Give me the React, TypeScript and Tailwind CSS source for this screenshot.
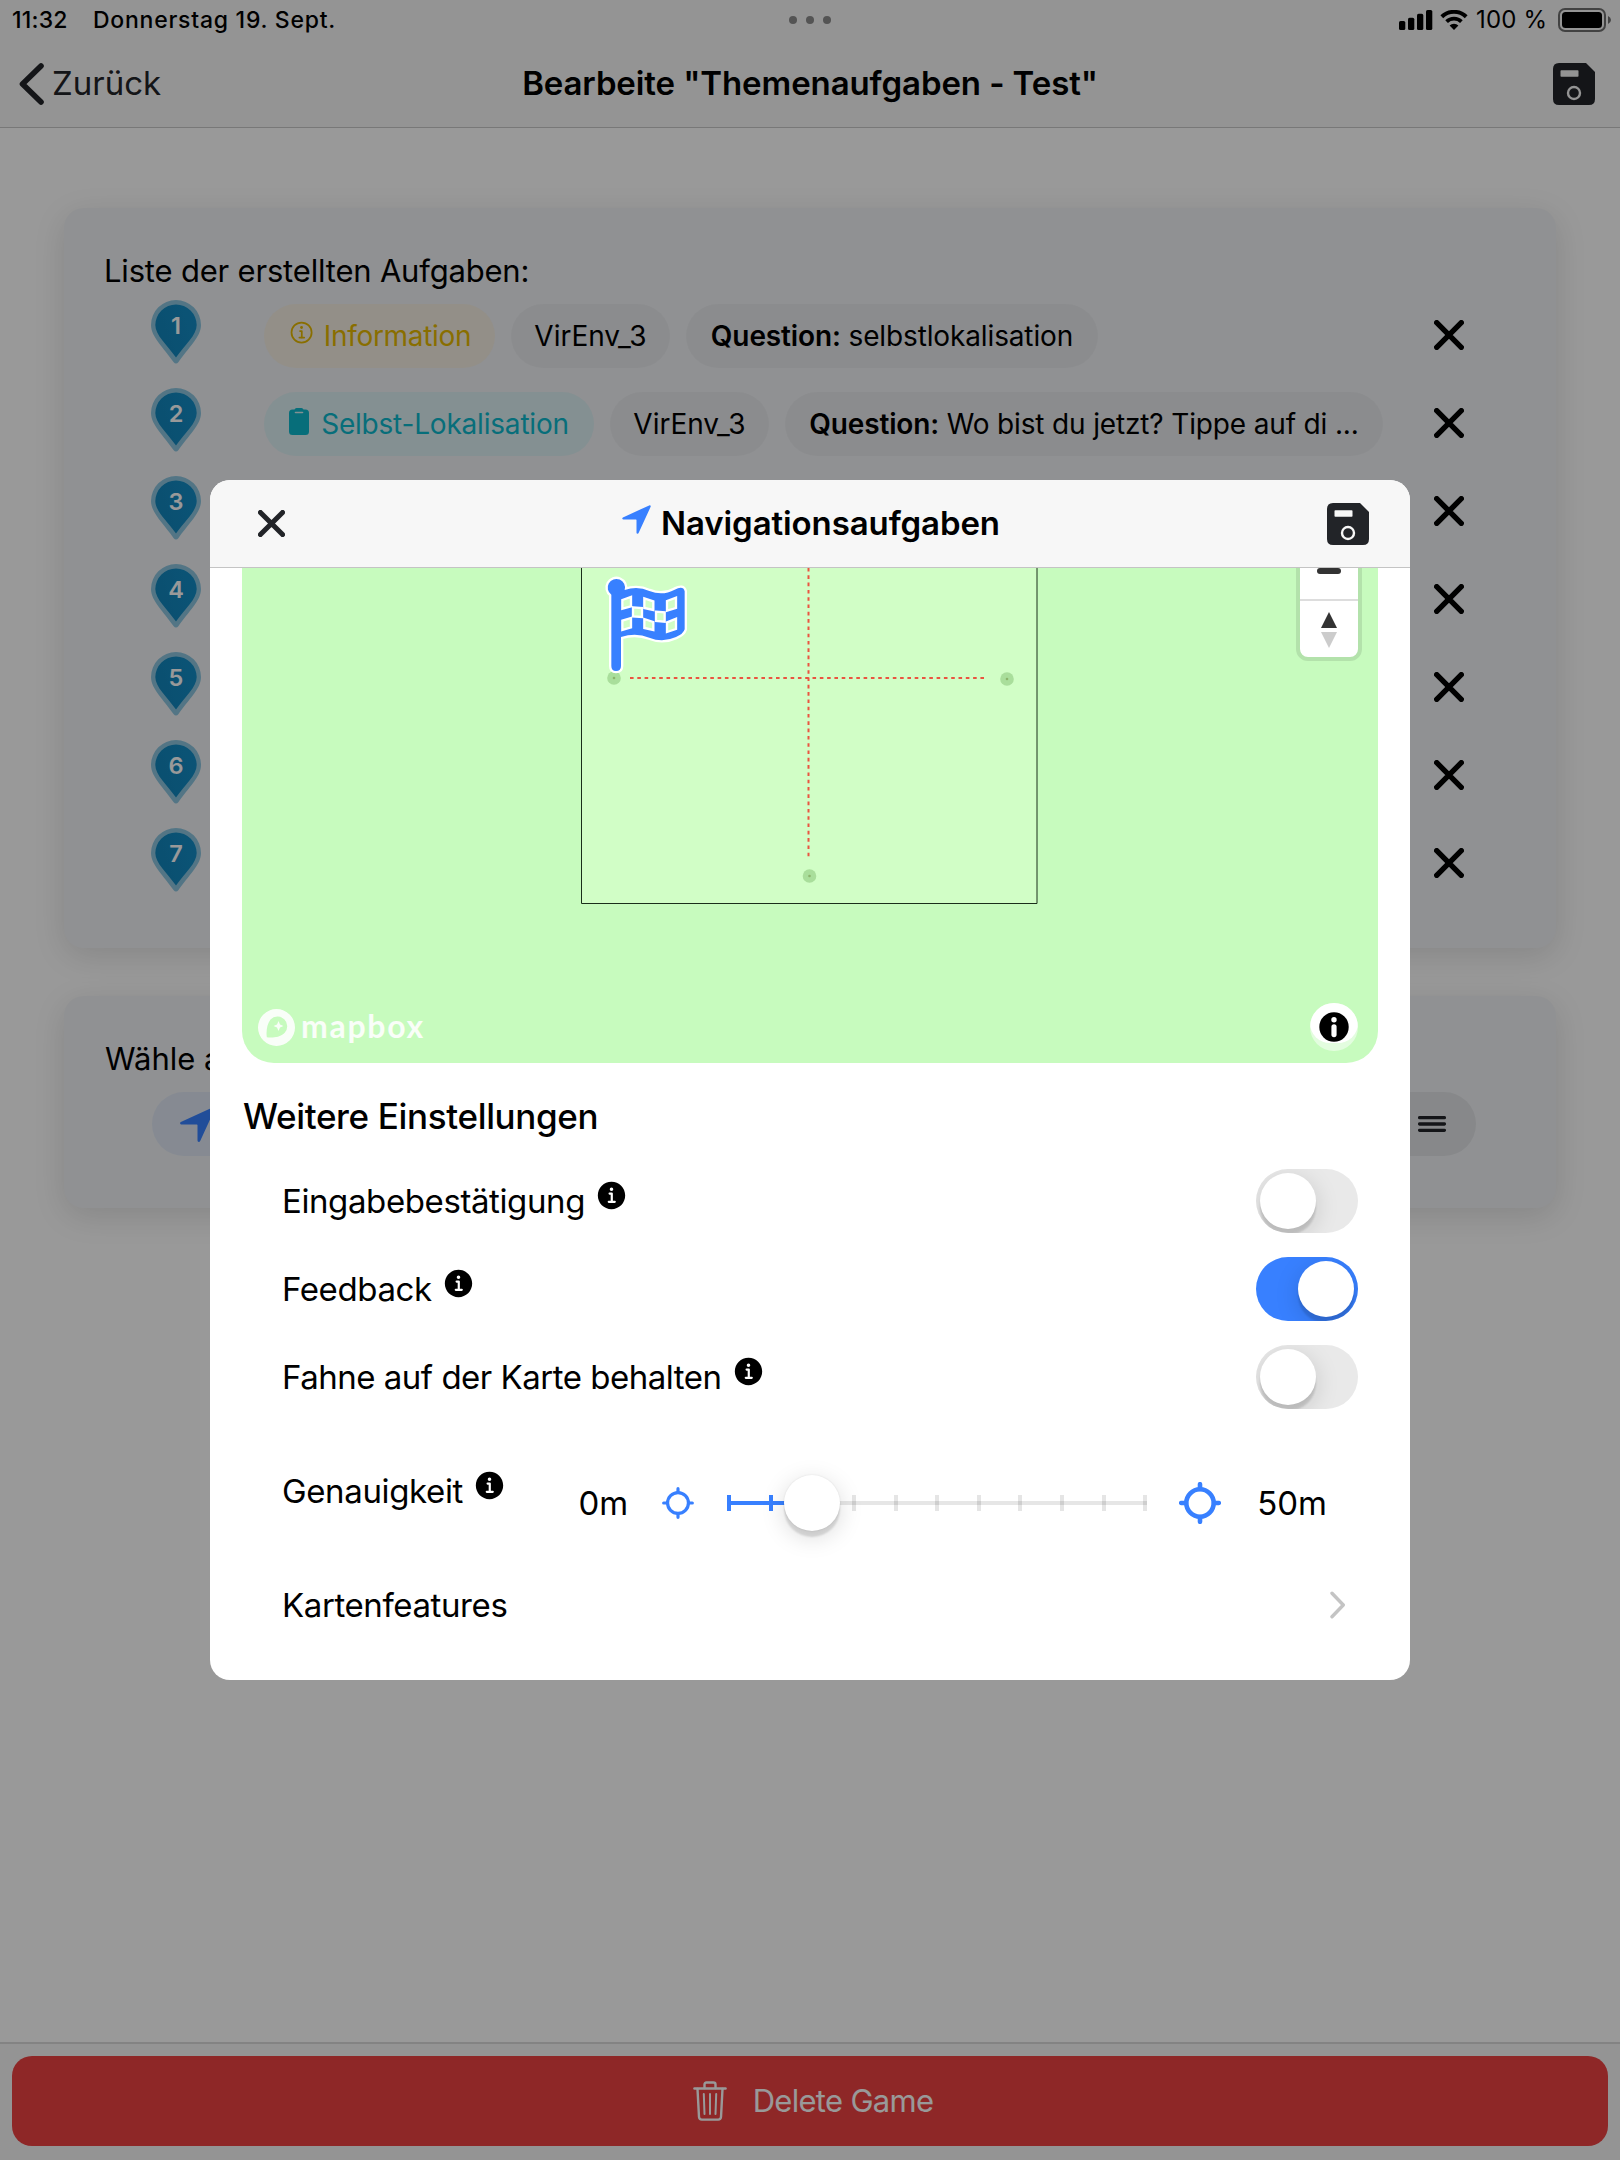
import React from "react";
import { IoInformationCircle, IoInformationCircleOutline, IoNavigate } from "react-icons/io5";

function SaveIcon({ hole }: { hole: string }) {
  return (
    <svg className="h-[42px] w-[42px] shrink-0" viewBox="0 0 42 42">
      <path d="M6 0H33L42 9V36Q42 42 36 42H6Q0 42 0 36V6Q0 0 6 0Z" fill="#222428" />
      <rect x="7.5" y="7.3" width="18" height="6.4" rx="0.8" fill={hole} />
      <circle cx="21" cy="30" r="6" fill="none" stroke={hole} strokeWidth="2.4" />
    </svg>
  );
}

function Cross({ className, width, color }: { className: string; width: number; color: string }) {
  return (
    <svg className={className} viewBox="0 0 30 30">
      <path d="M2.7 2.7L27.3 27.3M27.3 2.7L2.7 27.3" stroke={color} strokeWidth={width} strokeLinecap="round" />
    </svg>
  );
}

function StatusBar() {
  return (
    <div className="flex h-10 items-center pr-2 pl-3 text-[23px] font-medium">
      <span className="w-[81px] tracking-[0.2px]">11:32</span>
      <span className="tracking-[0.75px]">Donnerstag 19. Sept.</span>
      <div className="ml-auto flex items-center">
        <svg className="h-5 w-[34px]" viewBox="0 0 34 20">
          <rect x="0" y="11" width="6.3" height="9" rx="1.6" />
          <rect x="9" y="7.7" width="6.3" height="12.3" rx="1.6" />
          <rect x="18" y="3.8" width="6.3" height="16.2" rx="1.6" />
          <rect x="27" y="0" width="6.3" height="20" rx="1.6" />
        </svg>
        <svg className="ml-[7px] h-5 w-7" viewBox="0 0 28 20">
          <path d="M1.8 6.8A17.5 17.5 0 0 1 26.2 6.8" fill="none" stroke="#000" strokeWidth="4" />
          <path d="M6.6 11.7A10.6 10.6 0 0 1 21.4 11.7" fill="none" stroke="#000" strokeWidth="3.8" />
          <path d="M14 20L9.6 15.6A6.4 6.4 0 0 1 18.4 15.6Z" />
        </svg>
        <span className="ml-[8px] w-[82px] whitespace-nowrap text-[24px] font-normal tracking-[0.2px]">100 %</span>
        <svg className="h-6 w-[54px]" viewBox="0 0 54 24">
          <rect x="1" y="1" width="46" height="22" rx="6" fill="none" stroke="#6f6f6f" strokeWidth="2" />
          <rect x="4" y="4" width="40" height="16" rx="3.5" />
          <path d="M50 8Q53 9.5 53 12T50 16Z" fill="#6f6f6f" />
        </svg>
      </div>
    </div>
  );
}

function Pin({ n }: { n: number }) {
  return (
    <svg className="mb-[6px] h-16 w-[50px]" viewBox="0 0 50 64">
      <defs>
        <linearGradient id={`pin${n}`} x1="0" y1="0.6" x2="1" y2="0.2">
          <stop offset="0" stopColor="#1284ba" />
          <stop offset="1" stopColor="#138cc6" />
        </linearGradient>
      </defs>
      <path d="M25 0A25 25 0 0 1 50 25C50 37 37 48 27.5 62Q25 65 22.5 62C13 48 0 37 0 25A25 25 0 0 1 25 0Z" fill="#8bc4de" />
      <path d="M25 4.5A20.7 20.7 0 0 1 45.7 25C45.7 35 34 45 25 57.5C16 45 4.3 35 4.3 25A20.7 20.7 0 0 1 25 4.5Z" fill={`url(#pin${n})`} />
      <text x="25" y="33.5" textAnchor="middle" fontSize="23.5" fontWeight="600" fill="#fff" fontFamily="Inter">
        {n}
      </text>
    </svg>
  );
}

function Chip({ children, className }: { children: React.ReactNode; className: string }) {
  return (
    <div className={`flex h-16 items-center justify-center rounded-full text-[28px] whitespace-nowrap ${className}`}>
      {children}
    </div>
  );
}

function TaskRow({ n, children }: { n: number; children?: React.ReactNode }) {
  return (
    <div className="flex h-22 items-center pr-[92px] pl-[87px]">
      <Pin n={n} />
      <div className="mt-[2px] ml-[63px] flex gap-4">{children}</div>
      <Cross className="ml-auto h-[30px] w-[30px]" width={5.4} color="#000" />
    </div>
  );
}

function Toggle({ on }: { on?: boolean }) {
  return (
    <div className={`ml-auto flex h-16 w-[102px] overflow-hidden rounded-full p-1 ${on ? "justify-end bg-[#3880ff]" : "bg-[#e9e9e9]"}`}>
      <div className="h-14 w-14 rounded-full bg-white shadow-[0_6px_24px_rgba(0,0,0,0.15),0_6px_2px_rgba(0,0,0,0.12)]" />
    </div>
  );
}

function SettingRow({ label, tracking, info, children, className }: { label: string; tracking: string; info?: boolean; children?: React.ReactNode; className: string }) {
  return (
    <div className={`flex items-center pr-5 pl-[40px] text-[33px] ${className}`}>
      <span className={`pt-[2px] whitespace-nowrap ${tracking}`}>{label}</span>
      {info && <IoInformationCircle className="mb-3 ml-[9px] h-[35px] w-[35px] shrink-0" />}
      {children}
    </div>
  );
}

function Crosshair({ className, thick }: { className: string; thick: number }) {
  return (
    <svg className={className} viewBox="0 0 42 42" fill="none" stroke="#3880ff" strokeLinecap="round">
      <circle cx="21" cy="21" r="13.7" strokeWidth={thick} />
      <path d="M21 2.2V7M21 35V39.8M2.2 21H7M35 21H39.8" strokeWidth={thick} />
    </svg>
  );
}

function Slider() {
  return (
    <div className="relative ml-[33px] flex h-14 w-[420px] items-center">
      <div className="h-1 w-full bg-[#e6e6e6]" />
      <div className="absolute inset-0 flex items-center justify-between">
        {Array.from({ length: 11 }, (_, i) => (
          <div key={i} className={`h-4 w-1 ${i < 2 ? "bg-[#3880ff]" : "bg-black/10"}`} />
        ))}
      </div>
      <div className="absolute top-[26px] left-0 h-1 w-[84px] bg-[#3880ff]" />
      <div className="absolute top-0 left-[57px] h-14 w-14 rounded-full bg-white shadow-[0_0_2px_rgba(0,0,0,0.1),0_6px_24px_rgba(0,0,0,0.15),0_6px_2px_rgba(0,0,0,0.12)]" />
    </div>
  );
}

function MapView() {
  return (
    <div className="relative mx-8 h-[495px] overflow-hidden rounded-b-[32px] bg-[#c7fbbe]">
      {/* Drawing area: origin is the top left of the visible map */}
      <svg className="absolute inset-0" width="1136" height="495" viewBox="0 0 1136 495">
        <path d="M339.5 -10V335.5H795V-10Z" fill="#d1fec6" stroke="#1a2e1a" strokeWidth="1" />
        <path d="M566.5 0V292" stroke="#ea5540" strokeWidth="2" strokeDasharray="3.6 3.7" />
        <path d="M388 110H744" stroke="#ea5540" strokeWidth="2" strokeDasharray="3.6 3.7" />
        <g fill="#a9de9b">
          <circle cx="372" cy="110" r="6.8" />
          <circle cx="765" cy="111" r="6.8" />
          <circle cx="567.5" cy="308" r="6.8" />
        </g>
        <g fill="#8bb46c">
          <circle cx="372" cy="110" r="1.3" />
          <circle cx="765" cy="111" r="1.3" />
          <circle cx="567.5" cy="308" r="1.3" />
        </g>
      </svg>
      <svg className="absolute top-[-2px] left-[354px] h-[130px] w-[120px]" viewBox="0 0 360 390">
        <path
          d="M75 300Q75 315 60 315Q46 315 46 300V86A26 26 0 1 1 86 72Q125 59 160 75Q200 91 236 71Q262 58 266 76V190Q262 204 240 213Q200 231 160 215Q120 199 75 213Z"
          fill="#3880ff"
          stroke="#fff"
          strokeWidth="14"
          strokeLinejoin="round"
        />
        <path
          d="M75 300Q75 315 60 315Q46 315 46 300V86A26 26 0 1 1 86 72Q125 59 160 75Q200 91 236 71Q262 58 266 76V190Q262 204 240 213Q200 231 160 215Q120 199 75 213Z"
          fill="#3880ff"
        />
        <g fill="#d1fec6" stroke="#fff" strokeWidth="7">
          <path d="M79 102L105 93V121L79 128Z" />
          <path d="M145 97L172 106V132L145 126Z" />
          <path d="M213 105L240 95V126L213 134Z" />
          <path d="M111 124L138 126V153L111 151Z" />
          <path d="M180 137L206 139V167L180 165Z" />
          <path d="M79 164L105 156V184L79 192Z" />
          <path d="M145 159L172 168V192L145 186Z" />
          <path d="M213 169L240 158V189L213 198Z" />
        </g>
      </svg>
      <div className="absolute top-[-60px] right-4 w-[66px] rounded-xl border-4 border-[#b3e2ab] bg-white">
        <div className="flex h-[89px] items-end justify-center border-b-2 border-[#ddd] pb-[25px]">
          <div className="h-[6px] w-6 rounded-full bg-[#333]" />
        </div>
        <div className="flex h-[56px] items-center justify-center pt-[2px]">
          <svg className="h-9 w-4" viewBox="0 0 16 36">
            <path d="M0 16L8 0L16 16Z" fill="#333" />
            <path d="M0 20L8 36L16 20Z" fill="#ccc" />
          </svg>
        </div>
      </div>
      <div className="absolute bottom-[18px] left-4 flex h-9 items-center opacity-90">
        <svg className="h-[37px] w-[37px]" viewBox="0 0 37 37">
          <path
            fillRule="evenodd"
            fill="#fff"
            d="M18.5 0A18.5 18.5 0 1 1 18.5 37A18.5 18.5 0 1 1 18.5 0ZM8.8 28.2C13 29 21 29 26.5 24A9.6 9.6 0 1 0 12.5 10.5C9 15 8 22 8.8 28.2ZM20.5 12L22 15.5L25.5 17L22 18.5L20.5 22L19 18.5L15.5 17L19 15.5Z"
          />
        </svg>
        <span className="ml-[6px] pb-[3px] font-['Lato'] text-[32px] leading-9 font-bold tracking-[1.7px] text-white">mapbox</span>
      </div>
      <div className="absolute right-5 bottom-3 h-12 w-12 overflow-hidden rounded-full bg-white/50">
        <div className="h-10 rounded-[20px] bg-white" />
        <svg className="absolute top-[9px] left-[9px]" width="30" height="30" viewBox="0 0 30 30">
          <circle cx="15" cy="15" r="14.7" />
          <circle cx="15" cy="7.8" r="2.7" fill="#fff" />
          <rect x="12.4" y="12.2" width="5.2" height="13" rx="2.6" fill="#fff" />
        </svg>
      </div>
    </div>
  );
}

function Modal() {
  return (
    <div className="flex h-[1200px] w-[1200px] flex-col overflow-hidden rounded-[20px] bg-white">
      <div className="grid h-22 shrink-0 grid-cols-3 items-center border-b border-[#c4c4c4] bg-[#f7f7f7] pr-[41px] pl-[48px]">
        <Cross className="h-[27px] w-[27px]" width={5.6} color="#222428" />
        <div className="mr-[8px] flex items-center justify-center">
          <IoNavigate className="mb-[9px] h-[35px] w-[35px] shrink-0 text-[#3880ff]" />
          <span className="ml-[7px] pt-px text-[33px] font-semibold tracking-[-0.1px]">Navigationsaufgaben</span>
        </div>
        <div className="justify-self-end">
          <SaveIcon hole="#f7f7f7" />
        </div>
      </div>
      <MapView />
      <h2 className="mt-[23px] ml-[33px] h-[60px] text-[35px] leading-[60px] font-medium tracking-[-0.35px]">Weitere Einstellungen</h2>
      <div className="mx-8 mt-[11px]">
        <SettingRow className="h-22" label="Eingabebestätigung" tracking="tracking-[-0.4px]" info>
          <Toggle />
        </SettingRow>
        <SettingRow className="h-22" label="Feedback" tracking="tracking-[-0.4px]" info>
          <Toggle on />
        </SettingRow>
        <SettingRow className="h-22" label="Fahne auf der Karte behalten" tracking="tracking-[-0.49px]" info>
          <Toggle />
        </SettingRow>
        <SettingRow className="h-[140px]" label="Genauigkeit" tracking="tracking-[-0.37px]" info>
          <div className="mt-6 mr-[31px] ml-auto flex items-center">
            <span className="pt-px">0m</span>
            <Crosshair className="ml-[34px] h-[32px] w-[32px]" thick={4.2} />
            <Slider />
            <Crosshair className="ml-[32px] h-[42px] w-[42px]" thick={4.6} />
            <span className="ml-[36px] pt-px">50m</span>
          </div>
        </SettingRow>
        <SettingRow className="h-22" label="Kartenfeatures" tracking="tracking-[-0.4px]">
          <svg className="mr-[12px] ml-auto h-7 w-4" viewBox="0 0 16 28">
            <path d="M2 2.3L13.3 14L2 25.7" fill="none" stroke="#c4c4c4" strokeWidth="3.4" strokeLinecap="round" strokeLinejoin="round" />
          </svg>
        </SettingRow>
      </div>
    </div>
  );
}

const cardClass = "mx-16 rounded-[20px] bg-[#f0f2f5] shadow-[0_8px_32px_rgba(0,0,0,0.12)]";

export default function App() {
  return (
    <div className="relative flex h-[2160px] w-[1620px] flex-col overflow-hidden bg-white font-['Inter',sans-serif] text-black">
      <header className="h-32 shrink-0 border-b border-[#c8c8c8] bg-[#f7f7f7]">
        <StatusBar />
        <div className="grid h-[87px] grid-cols-[1fr_auto_1fr] items-center pr-[25px] pl-[19px]">
          <div className="flex items-center">
            <svg className="h-[42px] w-[25px]" viewBox="0 0 25 42">
              <path d="M22 3L3.5 21L22 39" fill="none" stroke="#222428" strokeWidth="5.6" strokeLinecap="round" strokeLinejoin="round" />
            </svg>
            <span className="ml-[8px] text-[33px] text-[#222428]">Zurück</span>
          </div>
          <span className="ml-[6px] pt-px text-[33px] font-semibold tracking-[-0.1px]">Bearbeite "Themenaufgaben - Test"</span>
          <div className="justify-self-end">
            <SaveIcon hole="#f7f7f7" />
          </div>
        </div>
        <div className="absolute top-4 left-[789px] flex gap-[9px]">
          <div className="h-2 w-2 rounded-full bg-[#8c8c8c]" />
          <div className="h-2 w-2 rounded-full bg-[#8c8c8c]" />
          <div className="h-2 w-2 rounded-full bg-[#8c8c8c]" />
        </div>
      </header>

      <main className="flex-1">
        <section className={`mt-20 h-[740px] pt-[43px] ${cardClass}`}>
          <div className="h-10 pl-[40px] text-[31px] leading-10 tracking-[-0.19px]">Liste der erstellten Aufgaben:</div>
          <TaskRow n={1}>
            <Chip className="w-[231px] bg-[#f5efe3] tracking-[-0.3px] text-[#e5b800]">
              <IoInformationCircleOutline className="mb-[6px] h-7 w-7" />
              <span className="ml-[8px]">Information</span>
            </Chip>
            <Chip className="w-[159px] bg-black/3">VirEnv_3</Chip>
            <Chip className="w-[412px] bg-black/3 tracking-[-0.13px]">
              <span>
                <b className="font-semibold">Question:</b> selbstlokalisation
              </span>
            </Chip>
          </TaskRow>
          <TaskRow n={2}>
            <Chip className="w-[330px] bg-[#dcf0f3] tracking-[-0.2px] text-[#0cb8cc]">
              <svg className="mb-[6px] h-[27px] w-5" viewBox="0 0 20 27">
                <path d="M5.5 1.5Q6 0 7.5 0H12.5Q14 0 14.5 1.5H16.5Q20 1.5 20 5V23.5Q20 27 16.5 27H3.5Q0 27 0 23.5V5Q0 1.5 3.5 1.5Z" fill="currentColor" />
                <path d="M6.5 4.5H13.5" stroke="#daf0f3" strokeWidth="1.6" strokeLinecap="round" />
              </svg>
              <span className="ml-[12px]">Selbst-Lokalisation</span>
            </Chip>
            <Chip className="w-[159px] bg-black/3">VirEnv_3</Chip>
            <Chip className="w-[598px] bg-black/3 tracking-[-0.15px]">
              <span>
                <b className="font-semibold">Question:</b> Wo bist du jetzt? Tippe auf di ...
              </span>
            </Chip>
          </TaskRow>
          {[3, 4, 5, 6, 7].map((n) => (
            <TaskRow key={n} n={n} />
          ))}
        </section>
        <section className={`mt-12 h-[212px] pt-[43px] ${cardClass}`}>
          <div className="h-10 pl-[41px] text-[31px] leading-10">Wähle aus:</div>
          <div className="mt-[13px] flex justify-between pr-20 pl-[88px]">
            <div className="flex h-16 w-[200px] items-center rounded-full bg-[#dfe7f4] pl-6 text-[#3880ff]">
              <IoNavigate className="h-[43px] w-[43px]" />
            </div>
            <div className="flex h-16 w-[100px] items-center justify-end rounded-full bg-black/6 pr-[30px]">
              <svg className="h-4 w-7" viewBox="0 0 28 16">
                <path d="M1.6 1.7H26.4M1.6 8H26.4M1.6 14.3H26.4" stroke="#222428" strokeWidth="3.3" strokeLinecap="round" />
              </svg>
            </div>
          </div>
        </section>
      </main>

      <footer className="h-[118px] shrink-0 border-t-2 border-[#dadada] bg-[#f7f7f7] px-3 pt-3">
        <button className="flex h-[90px] w-full items-center justify-center rounded-[20px] bg-[#ed4141] pl-[6px] text-[31px] text-white">
          <svg className="h-10 w-[34px]" viewBox="0 0 34 40" fill="none" stroke="#fff" strokeLinecap="round" strokeLinejoin="round">
            <path d="M1.5 7.5H32.5" strokeWidth="2.6" />
            <path d="M11.5 7V3.5Q11.5 1.5 13.5 1.5H20.5Q22.5 1.5 22.5 3.5V7" strokeWidth="2.4" />
            <path d="M4.5 8L6 36Q6.2 38.6 8.8 38.6H25.2Q27.8 38.6 28 36L29.5 8" strokeWidth="2.4" />
            <path d="M10.8 13L11.5 33M17 13V33M23.2 13L22.5 33" strokeWidth="2" />
          </svg>
          <span className="ml-[26px] pt-px tracking-[-0.7px]">Delete Game</span>
        </button>
      </footer>

      <div className="absolute inset-0 flex items-center justify-center bg-black/40">
        <Modal />
      </div>
    </div>
  );
}
